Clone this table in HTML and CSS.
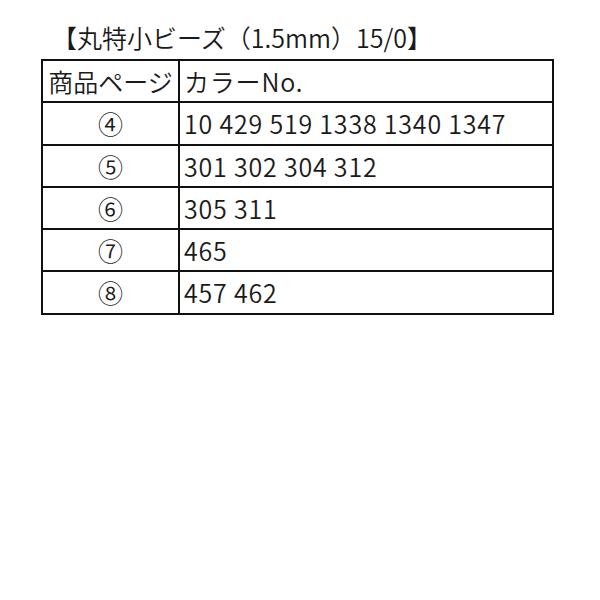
FILE: index.html
```html
<!DOCTYPE html>
<html lang="ja">
<head>
<meta charset="utf-8">
<link rel="stylesheet" href="styles.css">
</head>
<body>
<div class="page">
  <h1 class="title">【丸特小ビーズ（1.5mm）15/0】</h1>
  <table class="colors">
    <tr><th class="c1">商品ページ</th><th class="c2">カラーNo.</th></tr>
    <tr><td class="c1">④</td><td class="c2">10 429 519 1338 1340 1347</td></tr>
    <tr><td class="c1">⑤</td><td class="c2">301 302 304 312</td></tr>
    <tr><td class="c1">⑥</td><td class="c2">305 311</td></tr>
    <tr><td class="c1">⑦</td><td class="c2">465</td></tr>
    <tr><td class="c1">⑧</td><td class="c2">457 462</td></tr>
  </table>
</div>
</body>
</html>
```
FILE: styles.css
```css
html, body {
  margin: 0;
  padding: 0;
  background: #fff;
}
.page {
  padding: 20px 0 0 41px;
  font-family: "Noto Sans CJK JP", "Noto Sans", sans-serif;
  color: #1a1a1a;
}
.title {
  margin: 0 0 4px 11px;
  font-size: 25px;
  font-weight: 350;
  line-height: 34px;
  height: 35px;
}
.colors {
  border-collapse: collapse;
  width: 513px;
  font-size: 25px;
  font-weight: 350;
}
.colors th, .colors td {
  border: 2px solid #111;
  padding: 0;
  font-weight: 350;
  line-height: 40.3px;
  vertical-align: middle;
}
.c1 {
  width: 135px;
  text-align: center;
}
.c2 {
  text-align: left;
  letter-spacing: 0.8px;
  padding-left: 4px !important;
}
```
